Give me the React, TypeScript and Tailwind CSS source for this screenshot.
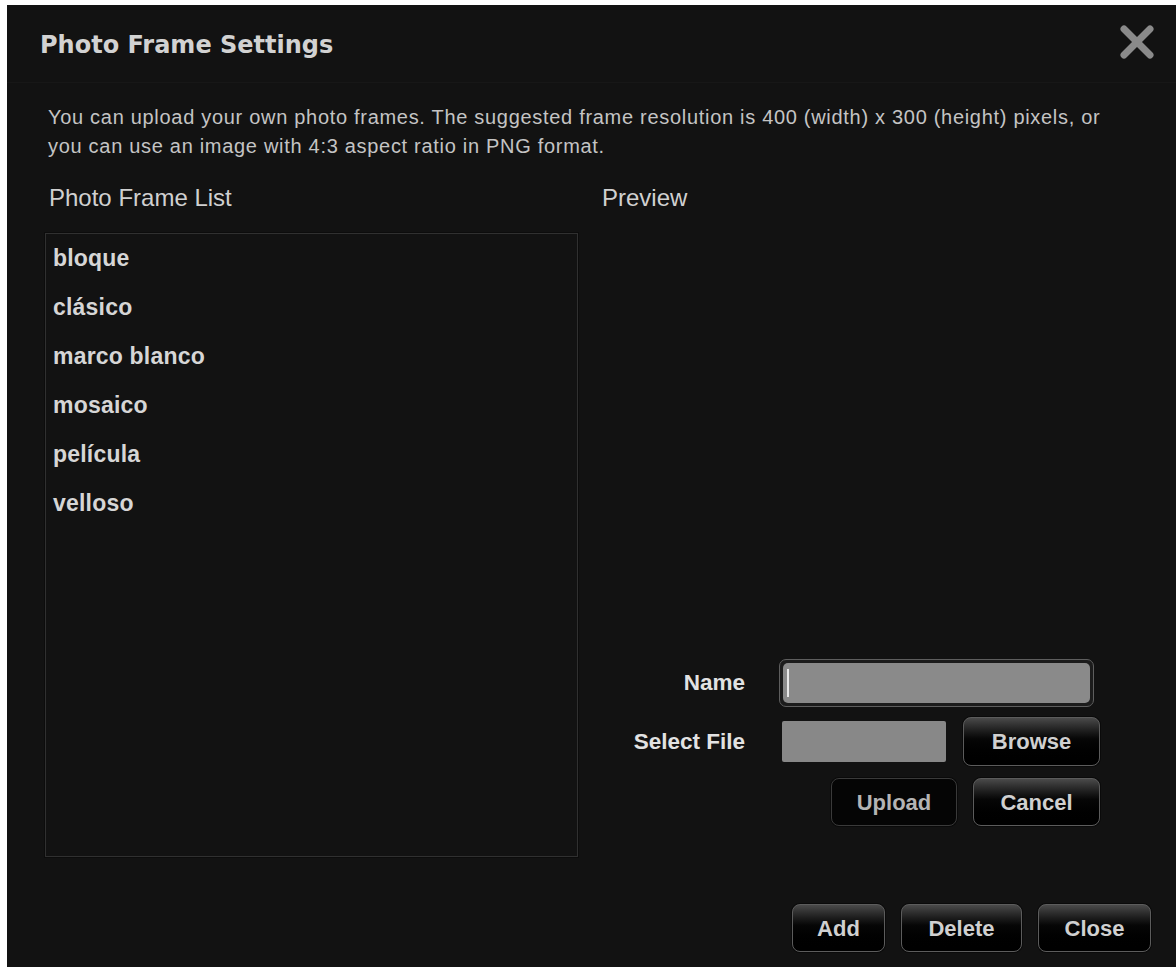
import React from "react";

const sans = "font-['Liberation_Sans',Arial,sans-serif]";

function Btn({ label, w, h = 48, dim = false }: { label: string; w: number; h?: number; dim?: boolean }) {
  return (
    <button
      style={{ width: w, height: h }}
      className={
        dim
          ? `${sans} flex items-center justify-center rounded-[8px] border border-[#3a3a3a] bg-[#050505] text-[22px] font-bold text-[#b4b4b4] shadow-[0_0_0_1px_#0a0a0a]`
          : `${sans} flex items-center justify-center rounded-[8px] border border-[#5c5c5c] bg-linear-to-b from-[#4a4a4a] via-[#060606] via-45% to-[#000000] text-[22px] font-bold text-[#d0d0d0] shadow-[0_0_0_1px_#0a0a0a]`
      }
    >
      {label}
    </button>
  );
}

export default function App() {
  const items = ["bloque", "clásico", "marco blanco", "mosaico", "película", "velloso"];
  return (
    <div className="w-[1176px] h-[967px] bg-white pl-[7px] pt-[5px]">
      <div className="flex h-full flex-col bg-[#121212]">
        {/* header */}
        <div className="flex h-[78px] items-center justify-between pl-[33px] pr-[21px] border-b border-[#171717]">
          <div className="mt-[2px] font-['DejaVu_Sans',Verdana,sans-serif] text-[24px] font-bold text-[#d2d2d2]">
            Photo Frame Settings
          </div>
          <svg width="36" height="34" viewBox="0 0 36 34" className="mb-[4px]">
            <line x1="5" y1="4" x2="31" y2="30" stroke="#8a8a8a" strokeWidth="7" strokeLinecap="round" />
            <line x1="31" y1="4" x2="5" y2="30" stroke="#8a8a8a" strokeWidth="7" strokeLinecap="round" />
          </svg>
        </div>

        {/* description */}
        <div className={`${sans} mt-[20px] pl-[41px] w-[1150px] text-[20px] tracking-[0.7px] leading-[29px] text-[#c4c4c4]`}>
          You can upload your own photo frames. The suggested frame resolution is 400 (width) x 300 (height) pixels, or
          <br />
          you can use an image with 4:3 aspect ratio in PNG format.
        </div>

        {/* main */}
        <div className="mt-[23px] flex h-[673px] pl-[38px]">
          <div className="flex w-[533px] flex-col">
            <div className={`${sans} h-[49px] pl-[4px] text-[24px] leading-[28px] text-[#d0d0d0]`}>Photo Frame List</div>
            <div className="flex flex-1 flex-col border border-[#303030] shadow-[0_0_0_1px_#0c0c0c]">
              {items.map((it) => (
                <div key={it} className={`${sans} flex h-[49px] items-center pl-[7px] text-[23px] tracking-[0.2px] font-bold text-[#d6d6d6]`}>
                  {it}
                </div>
              ))}
            </div>
          </div>

          <div className="ml-[24px] flex flex-1 flex-col">
            <div className={`${sans} h-[28px] text-[24px] leading-[28px] text-[#d0d0d0]`}>Preview</div>

            <div className="mt-auto mb-[31px] grid grid-cols-[143px_auto] gap-x-[34px]">
              {/* row 1 */}
              <div className={`${sans} flex items-center justify-end text-[22.5px] font-bold text-[#e2e2e2]`}>Name</div>
              <div className="flex h-[48px] w-[315px] items-stretch rounded-[7px] border border-[#5e5e5e] bg-[#1c1c1c] p-[3px]">
                <div className="flex flex-1 items-center rounded-[5px] bg-[#8a8a8a] pl-[4px]">
                  <div className="h-[28px] w-[2px] bg-[#e8e8e8]" />
                </div>
              </div>

              {/* row 2 */}
              <div className={`${sans} mt-[10px] flex items-center justify-end text-[22.5px] font-bold text-[#e2e2e2]`}>Select File</div>
              <div className="mt-[10px] flex items-center">
                <div className="ml-[3px] h-[41px] w-[164px] rounded-[2px] bg-[#888888]" />
                <div className="ml-[17px]">
                  <Btn label="Browse" w={137} h={49} />
                </div>
              </div>

              {/* row 3 */}
              <div />
              <div className="mt-[12px] flex">
                <div className="ml-[52px]">
                  <Btn label="Upload" w={126} dim />
                </div>
                <div className="ml-[16px]">
                  <Btn label="Cancel" w={127} />
                </div>
              </div>
            </div>
          </div>
        </div>

        {/* footer */}
        <div className="mt-[47px] flex justify-end gap-[16px] pr-[25px]">
          <Btn label="Add" w={93} />
          <Btn label="Delete" w={121} />
          <Btn label="Close" w={113} />
        </div>
      </div>
    </div>
  );
}
